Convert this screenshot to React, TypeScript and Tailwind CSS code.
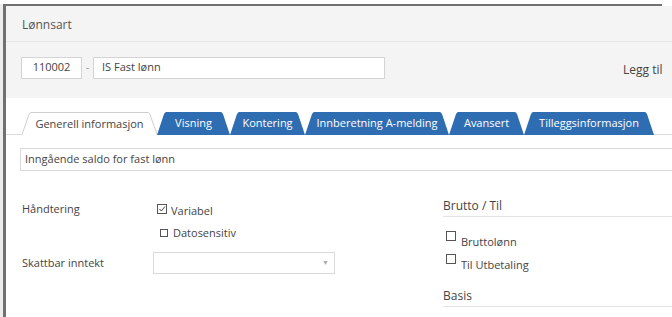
import type { ReactNode } from "react";

const BLUE = "#2f6db3";

type Tab = { label: string; width: number; active?: boolean };

const tabs: Tab[] = [
  { label: "Generell informasjon", width: 135, active: true },
  { label: "Visning", width: 73 },
  { label: "Kontering", width: 75 },
  { label: "Innberetning A-melding", width: 144 },
  { label: "Avansert", width: 75 },
  { label: "Tilleggsinformasjon", width: 130 },
];

const TabItem = ({ tab }: { tab: Tab }) => {
  if (tab.active) {
    return (
      <div className="flex h-[23px] shrink-0" style={{ width: tab.width }}>
        <svg width="9" height="23" viewBox="0 0 9 23" className="shrink-0">
          <path d="M0 22.5 L7 2.5 Q8 0.5 9 0.5 L9 23 L0 23 Z" fill="#fff" />
          <path d="M0 22.5 L7 2.5 Q8 0.5 9 0.5" fill="none" stroke="#cfcfcf" />
        </svg>
        <div className="flex-1 flex items-center justify-center whitespace-nowrap border-t border-[#cfcfcf] bg-white text-[11px] text-[#444]">
          {tab.label}
        </div>
        <svg width="9" height="23" viewBox="0 0 9 23" className="shrink-0">
          <path d="M9 22.5 L2 2.5 Q1 0.5 0 0.5 L0 23 L9 23 Z" fill="#fff" />
          <path d="M9 22.5 L2 2.5 Q1 0.5 0 0.5" fill="none" stroke="#cfcfcf" />
        </svg>
      </div>
    );
  }
  return (
    <div className="flex h-[23px] shrink-0" style={{ width: tab.width }}>
      <svg width="9" height="23" viewBox="0 0 9 23" className="shrink-0">
        <path d="M0 23 L7 2 Q8 0 9.5 0 L9.5 23 Z" fill={BLUE} />
      </svg>
      <div className="flex-1 flex items-center justify-center whitespace-nowrap bg-[#2f6db3] text-[11px] text-white">
        {tab.label}
      </div>
      <svg width="9" height="23" viewBox="0 0 9 23" className="shrink-0">
        <path d="M9 23 L2 2 Q1 0 -0.5 0 L-0.5 23 Z" fill={BLUE} />
      </svg>
    </div>
  );
};

const Box = ({ checked, size = 9 }: { checked?: boolean; size?: number }) => (
  <svg width={size + 1} height={size + 1} viewBox={`0 0 ${size + 1} ${size + 1}`} className="shrink-0">
    <rect x="0.5" y="0.5" width={size} height={size} fill="#fff" stroke="#555" />
    {checked && (
      <path d="M2.5 5 L4.3 7 L8 2.5" fill="none" stroke="#444" strokeWidth="1" />
    )}
  </svg>
);

const Heading = ({ children }: { children: ReactNode }) => (
  <div className="border-b border-[#e4e4e4] pb-[2px] leading-[16px] text-[12px] text-[#444]">{children}</div>
);

export default function App() {
  return (
    <div
      className="w-[672px] h-[317px] overflow-hidden bg-white flex pt-[4px]"
      style={{ fontFamily: '"Open Sans", "Noto Sans", sans-serif' }}
    >
      <div className="w-[3px] shrink-0 bg-[#ececec]" />
      <div className="w-[659px] shrink-0 border-l-[3px] border-t-2 border-[#707070]">
        <div className="w-[700px] text-[#444]">
          {/* header */}
          <div className="h-[36px] bg-[#f4f4f4] border-b border-[#e6e6e6] flex items-center pl-[16px] pt-[3px] text-[12px] text-[#555]">
            Lønnsart
          </div>

          {/* number + name */}
          <div className="bg-[#f4f4f4] pl-[15px] pt-[14px] pb-[19px] flex items-center">
            <div className="w-[61px] h-[22px] bg-white border border-[#d4d4d4] flex items-center justify-center text-[11px]">
              110002
            </div>
            <span className="w-[11px] text-center text-[#999] text-[11px]">-</span>
            <div className="w-[292px] h-[22px] bg-white border border-[#d4d4d4] flex items-center pl-[8px] text-[11px]">
              IS Fast lønn
            </div>
            <span className="ml-[238px] pt-[5px] text-[12px] text-[#444]">Legg til</span>
          </div>

          {/* tabs */}
          <div className="flex items-end pt-[13px] h-[37px]">
            <div className="w-[16px] h-[23px] border-b border-[#dcdcdc] shrink-0" />
            {tabs.map((t) => (
              <TabItem key={t.label} tab={t} />
            ))}
            <div className="flex-1 h-[23px] border-b border-[#dcdcdc]" />
          </div>

          {/* description */}
          <div className="pl-[14px] pt-[13px]">
            <div className="h-[23px] border border-[#d9d9d9] flex items-center pl-[4px] text-[11px]">
              Inngående saldo for fast lønn
            </div>
          </div>

          {/* fields */}
          <div className="flex pt-[28px]">
            <div className="w-[437px] shrink-0 pl-[16px]">
              <div className="flex">
                <div className="w-[131px] text-[11px] pt-[2px]">Håndtering</div>
                <div className="flex flex-col gap-[5px] pl-[4px]">
                  <div className="flex items-center gap-[4px] text-[11px]">
                    <Box checked size={9} />
                    <span className="pt-[4px]">Variabel</span>
                  </div>
                  <div className="flex items-center gap-[5px] pl-[3px] text-[11px]">
                    <Box size={7} />
                    <span>Datosensitiv</span>
                  </div>
                </div>
              </div>
              <div className="flex items-center mt-[11px]">
                <div className="w-[131px] text-[11px]">Skattbar inntekt</div>
                <div className="w-[182px] h-[22px] border border-[#d9d9d9] flex items-center justify-end pr-[5px]">
                  <span className="text-[7px] text-[#aaa]">▼</span>
                </div>
              </div>
            </div>
            <div className="flex-1 -mt-[1px]">
              <Heading>Brutto / Til</Heading>
              <div className="flex flex-col gap-[3px] pt-[14px] pl-[3px] text-[11px]">
                <div className="flex items-start gap-[5px]">
                  <Box size={9} />
                  <span className="pt-[3px]">Bruttolønn</span>
                </div>
                <div className="flex items-start gap-[5px]">
                  <Box size={9} />
                  <span className="pt-[3px]">Til Utbetaling</span>
                </div>
              </div>
              <div className="pt-[15px]">
                <Heading>Basis</Heading>
              </div>
            </div>
          </div>
        </div>
      </div>
    </div>
  );
}
